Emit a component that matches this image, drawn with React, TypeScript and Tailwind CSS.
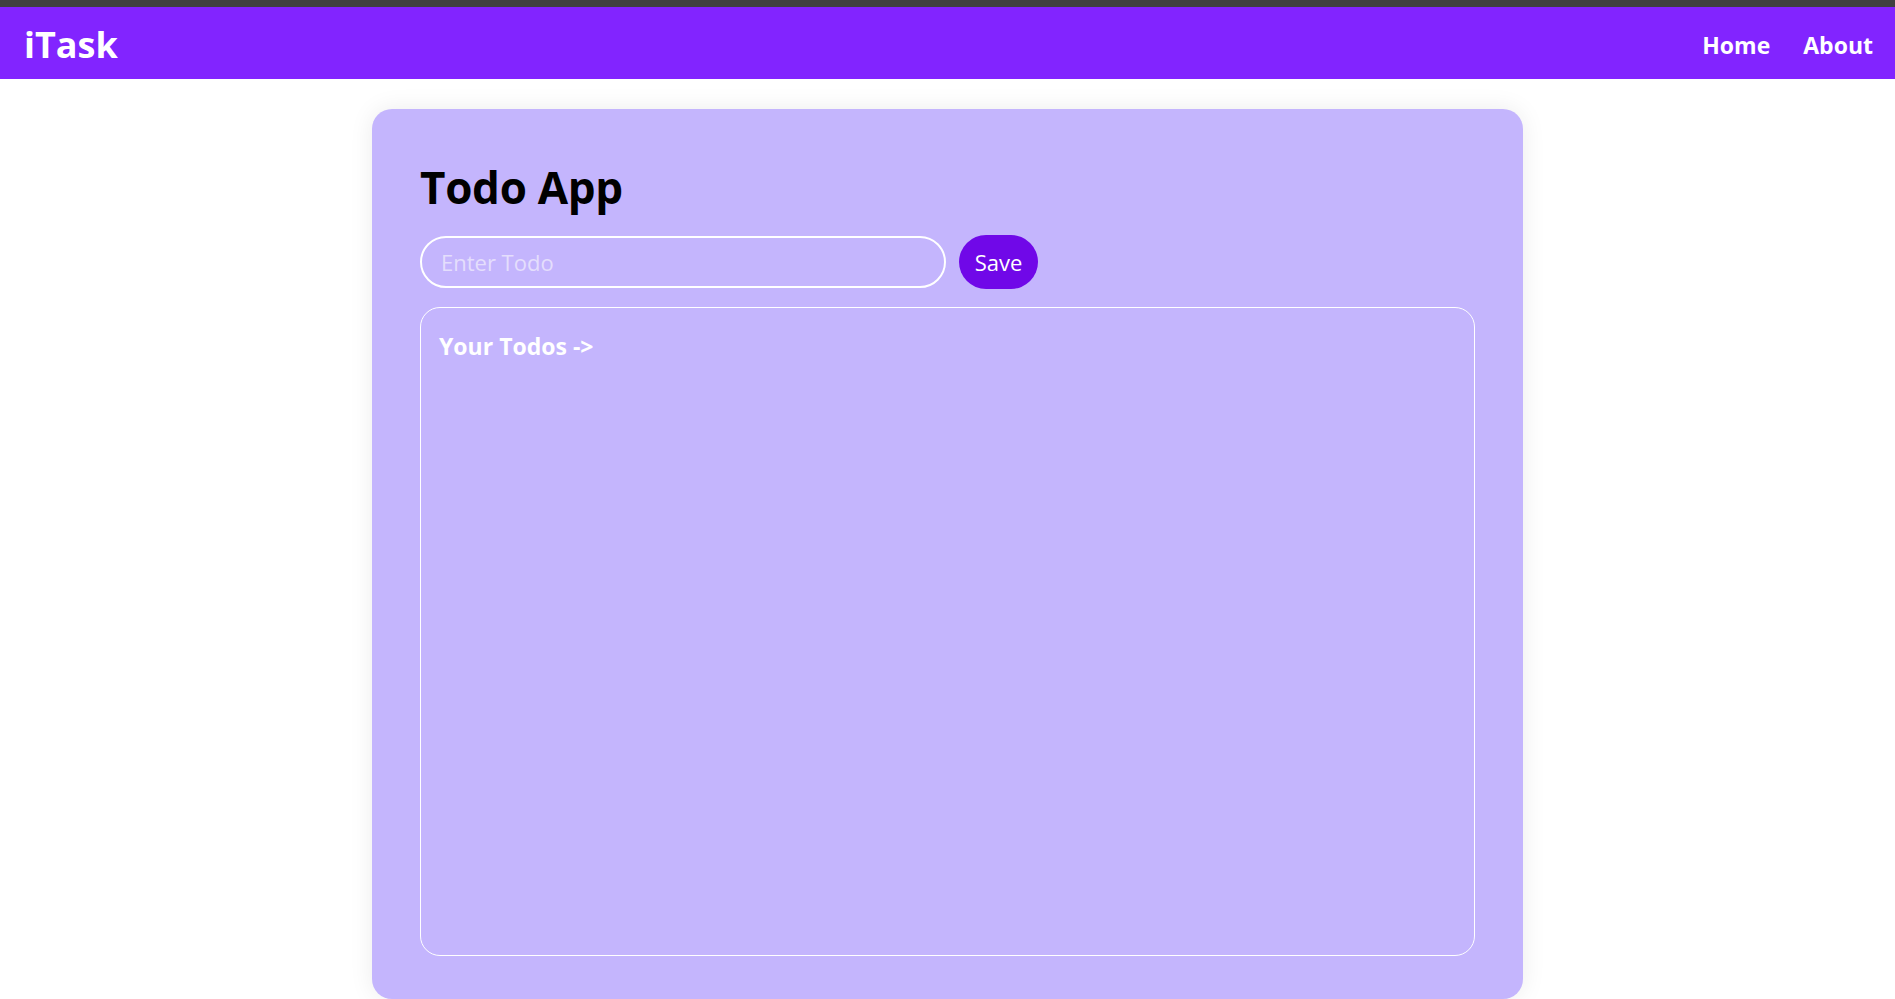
import React, { useState } from "react";

const font = { fontFamily: '"Open Sans", "Noto Sans", sans-serif' };

const Navbar = () => {
  return (
    <>
      <div className="h-[7px] bg-[#404040]" />
      <nav className="flex h-[72px] items-center justify-between bg-[#8224ff] pl-[24px] pr-[22px] pt-[4px] text-white">
        <div className="text-[36px] font-bold">iTask</div>
        <ul className="flex gap-[33px] text-[23px] font-bold">
          <li className="cursor-pointer">Home</li>
          <li className="cursor-pointer">About</li>
        </ul>
      </nav>
    </>
  );
};

export default function App() {
  const [todo, setTodo] = useState("");
  const [todos, setTodos] = useState<string[]>([]);

  const handleSave = () => {
    if (!todo.trim()) return;
    setTodos([...todos, todo]);
    setTodo("");
  };

  return (
    <div className="min-h-screen bg-white" style={font}>
      <Navbar />
      <div className="mx-auto mt-[30px] w-[1151px] rounded-[20px] bg-[#c4b5fd] px-[48px] pt-[53px] pb-[43px] shadow-[0_0_25px_rgba(0,0,0,0.08)]">
        <h1 className="text-[44px] font-bold leading-[50px] tracking-[-0.3px] text-black">Todo App</h1>
        <div className="mt-[23px] flex items-center gap-[13px]">
          <input
            type="text"
            value={todo}
            onChange={(e) => setTodo(e.target.value)}
            placeholder="Enter Todo"
            className="h-[52px] w-[526px] rounded-full border-[2.5px] border-white bg-transparent px-[19px] text-[22px] text-white outline-none placeholder:text-[#e4defc]"
          />
          <button
            onClick={handleSave}
            className="h-[54px] w-[79px] rounded-full bg-[#7008e8] text-[22px] text-white"
          >
            Save
          </button>
        </div>
        <div className="mt-[18px] h-[649px] rounded-[20px] border border-white px-[18px] pt-[21px]">
          <h2 className="text-[23px] font-bold text-white">Your Todos -&gt;</h2>
          {todos.map((t, i) => (
            <div key={i} className="mt-2 text-[20px] text-white">
              {t}
            </div>
          ))}
        </div>
      </div>
    </div>
  );
}
